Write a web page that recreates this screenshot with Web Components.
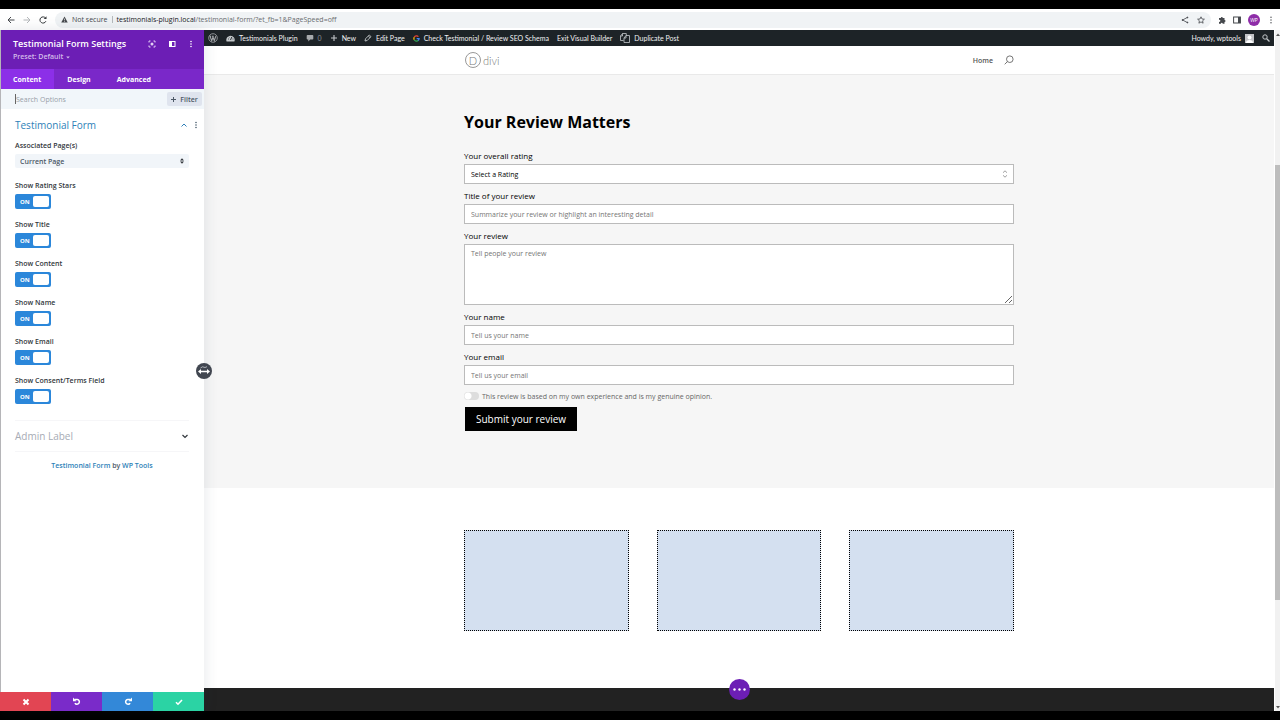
<!DOCTYPE html>
<html lang="en">
<head>
<meta charset="utf-8">
<title>Testimonial Form Settings</title>
<style>
  body {
    margin: 0;
    background: #000;
    font-family: "Open Sans", "Noto Sans", sans-serif;
    font-size: 7px;
  }
</style>
</head>
<body>
<builder-app></builder-app>

<script>
  const BASE = `
    :host, * { box-sizing: border-box; }
    button, input, select, textarea { font: inherit; color: inherit; margin: 0; }
    button { padding: 0; border: 0; background: none; cursor: pointer; }
    a { color: inherit; text-decoration: none; }
    svg { display: block; flex: none; }
  `;

  class BaseElement extends HTMLElement {
    constructor() {
      super();
      const shadow = this.attachShadow({ mode: "open" });
      shadow.innerHTML = `<style>${BASE}${this.styles()}</style>${this.markup()}`;
    }
  }

  /* BROWSER TOOLBAR */

  class BrowserBar extends BaseElement {
    styles() {
      return `
        :host { display: flex; align-items: center; height: 21px; padding: 0 5px 0 6px; gap: 7px; background: #fff; color: #45484c; }
        .nav { display: flex; gap: 6px; }
        .address { flex: 1; display: flex; align-items: center; gap: 4px; height: 16px; padding: 0 6px; border-radius: 8px; background: #f0f3f5; }
        .url { flex: 1; color: #6a6d70; white-space: nowrap; }
        .url b { font-weight: 500; color: #202124; }
        .sep { width: 1px; height: 7px; background: #b5b9bc; }
        .page-actions { display: flex; gap: 8px; }
        .tools { display: flex; align-items: center; gap: 7px; }
        .avatar { width: 12px; height: 12px; border-radius: 50%; background: #8e2da8; color: #fff; font-size: 5px; line-height: 12px; text-align: center; }
      `;
    }
    markup() {
      return `
        <div class="nav">
          <button aria-label="Back"><svg width="10" height="10" viewBox="0 0 10 10" fill="none" stroke="#45484c"><path d="M8.5 5H2M5 2 2 5l3 3"/></svg></button>
          <button aria-label="Forward"><svg width="10" height="10" viewBox="0 0 10 10" fill="none" stroke="#b4b7ba"><path d="M1.5 5H8M5 2l3 3-3 3"/></svg></button>
          <button aria-label="Reload"><svg width="10" height="10" viewBox="0 0 10 10" fill="none" stroke="#35383b"><path d="M7.9 6.2A3.1 3.1 0 1 1 7.6 3.2"/><path d="M8.5 1.2V4H5.7z" fill="#35383b" stroke="none"/></svg></button>
        </div>
        <div class="address">
          <svg width="7" height="7" viewBox="0 0 8 8"><path d="M4 .5 7.7 7.5H.3z" fill="#45484c"/><path d="M4 3v2M4 5.7v.9" stroke="#f0f3f5" stroke-width=".8"/></svg>
          <span>Not secure</span>
          <span class="sep"></span>
          <span class="url"><b>testimonials-plugin.local</b>/testimonial-form/?et_fb=1&amp;PageSpeed=off</span>
          <div class="page-actions">
            <button aria-label="Share"><svg width="8" height="8" viewBox="0 0 8 8" fill="#45484c" stroke="#45484c" stroke-width=".8"><path d="M6.3 1.5 1.5 4l4.8 2.500" fill="none"/><circle cx="6.4" cy="1.5" r=".5"/><circle cx="1.5" cy="4" r=".5"/><circle cx="6.4" cy="6.5" r=".5"/></svg></button>
            <button aria-label="Bookmark"><svg width="8" height="8" viewBox="0 0 8 8" fill="none" stroke="#45484c" stroke-width=".8"><path d="M4 .8 5 3l2.400.2-1.800 1.600.5 2.400L4 5.900 1.900 7.200l.5-2.400L.6 3.200 3 3z"/></svg></button>
          </div>
        </div>
        <div class="tools">
          <button aria-label="Extensions"><svg width="8" height="8" viewBox="0 0 8 8" fill="#45484c"><path d="M1 2h1.800a1 1 0 1 1 2 0h1.700v1.900a1 1 0 1 1 0 2v1.800H4.700a.9.9 0 1 0-1.800 0H1V5.800a1 1 0 1 0 0-1.900z"/></svg></button>
          <button aria-label="Side panel"><svg width="8" height="8" viewBox="0 0 8 8"><rect x=".6" y="1" width="6.8" height="6" fill="none" stroke="#45484c"/><path d="M5 1h2.500v6H5z" fill="#45484c"/></svg></button>
          <span class="avatar">WP</span>
          <button aria-label="Menu"><svg width="8" height="8" viewBox="0 0 8 8" fill="#45484c"><circle cx="4" cy="1.200" r=".7"/><circle cx="4" cy="4" r=".7"/><circle cx="4" cy="6.800" r=".7"/></svg></button>
        </div>
      `;
    }
  }

  /* SETTINGS PANEL */

  class ToggleOption extends BaseElement {
    styles() {
      return `
        :host { display: block; color: #32373c; }
        label { display: block; width: max-content; margin-bottom: 1px; font-weight: 600; line-height: 14px; cursor: pointer; }
        .switch { display: grid; width: 36px; height: 15px; border-radius: 2px; background: #2b87da; }
        .switch > * { grid-area: 1 / 1; }
        input { appearance: none; width: 36px; height: 15px; cursor: pointer; }
        .track { display: flex; align-items: center; justify-content: space-between; padding: 2px 2px 2px 5px; color: #fff; font-size: 6px; font-weight: 700; pointer-events: none; }
        .knob { width: 16px; height: 11px; border-radius: 2px; background: #fff; }
      `;
    }
    markup() {
      return `
        <label for="option"><slot></slot></label>
        <div class="switch">
          <input id="option" type="checkbox" checked>
          <span class="track">ON<span class="knob"></span></span>
        </div>
      `;
    }
  }

  class SettingsPanel extends BaseElement {
    styles() {
      return `
        :host { position: relative; z-index: 1; display: flex; flex-direction: column; background: #fff; border-left: 1px solid #b5b5b8; box-shadow: 0 0 14px rgba(43, 60, 80, .12); }
        header { height: 39px; padding: 7px 10px 0 12px; background: #6c1eb5; color: #fff; }
        .top { display: flex; align-items: center; }
        h1 { flex: 1; margin: 0; font-size: 9px; font-weight: 600; line-height: 14px; white-space: nowrap; }
        .icons { display: flex; gap: 12px; }
        .preset { display: flex; align-items: center; gap: 3px; line-height: 12px; color: #d3bcea; font-weight: 600; }
        .tabs { display: flex; height: 20px; background: #7a28c9; color: #fff; }
        .tabs button { padding: 0 13px; font-weight: 700; }
        .tabs .active { padding-left: 12px; background: #8c2fe8; }
        .search { display: flex; align-items: center; height: 20px; padding: 0 2px 0 14px; background: #f1f6fa; }
        .search input { flex: 1; min-width: 0; height: 10px; padding: 0; border: 0; border-left: 1px solid #666; outline: 0; background: none; }
        .search input::placeholder { color: #98a0a8; opacity: 1; }
        .filter { display: flex; align-items: center; justify-content: center; gap: 4px; width: 35px; height: 14px; border-radius: 2px; background: #dfe4ee; color: #4c5866; font-weight: 600; }
        .body { flex: 1; padding: 0 15px 0 14px; }
        .group { display: flex; align-items: center; height: 32px; }
        h2 { flex: 1; margin: 0; color: #2e7fb8; font-size: 10px; font-weight: 400; }
        .group .more { margin: 0 -11px 0 4px; }
        .field { display: block; color: #32373c; font-weight: 600; line-height: 10px; }
        .select { display: grid; align-items: center; margin-top: 3px; color: #4c5866; font-weight: 600; }
        .select > * { grid-area: 1 / 1; }
        select { appearance: none; width: 100%; height: 14px; padding: 0 5px; border: 0; border-radius: 2px; background: #f1f5f9; }
        .select svg { justify-self: end; margin-right: 5px; pointer-events: none; }
        .toggles { display: grid; gap: 9px; padding: 11px 0 16px; }
        .admin { border: solid #f6f6f8; border-width: 1px 0; }
        .admin h2 { color: #a7abb5; }
        .credit { margin: 0; line-height: 28px; text-align: center; color: #4c5866; font-weight: 600; }
        .credit a { color: #2e7fb8; }
        .actions { display: grid; grid-template-columns: repeat(4, 1fr); height: 19px; margin-left: -1px; }
        .actions button { display: grid; place-items: center; }
        .discard { background: #e24553; }
        .undo { background: #7a2bc9; }
        .redo { background: #3388d8; }
        .save { background: #2bd3a4; }
        .handle { position: absolute; top: 333px; right: -8px; display: grid; place-items: center; width: 16px; height: 16px; border-radius: 50%; background: #414650; }
      `;
    }
    markup() {
      return `
        <header>
          <div class="top">
            <h1>Testimonial Form Settings</h1>
            <div class="icons">
              <button aria-label="Expand"><svg width="8" height="8" viewBox="0 0 8 8" fill="none" stroke="#e2d0f4"><path d="M1 2.500V1h1.500M5.500 1H7v1.500M7 5.500V7H5.500M2.500 7H1V5.500"/><circle cx="4" cy="4" r="1.500" fill="#e2d0f4" stroke="none"/></svg></button>
              <button aria-label="Dock"><svg width="8" height="8" viewBox="0 0 8 8" fill="none" stroke="#fff"><rect x="1.500" y="1.500" width="5.500" height="5"/><path d="M1.500 1.500h2v5h-2z" fill="#fff"/></svg></button>
              <button aria-label="More"><svg width="6" height="8" viewBox="0 0 6 8" fill="#fff"><circle cx="3" cy="1.500" r=".8"/><circle cx="3" cy="4" r=".8"/><circle cx="3" cy="6.500" r=".8"/></svg></button>
            </div>
          </div>
          <button class="preset">Preset: Default <svg width="4" height="3" viewBox="0 0 4 3"><path d="M.2.5h3.600L2 2.500z" fill="#d3bcea"/></svg></button>
        </header>
        <nav class="tabs">
          <button class="active">Content</button>
          <button>Design</button>
          <button>Advanced</button>
        </nav>
        <div class="search">
          <input type="text" placeholder="Search Options" aria-label="Search Options">
          <button class="filter"><svg width="5" height="5" viewBox="0 0 5 5" stroke="#4c5866"><path d="M2.500 0v5M0 2.500h5"/></svg>Filter</button>
        </div>
        <div class="body">
          <div class="group">
            <h2>Testimonial Form</h2>
            <button aria-label="Collapse"><svg width="8" height="8" viewBox="0 0 8 8" fill="none" stroke="#2e7fb8"><path d="M1.500 5.500 4 3l2.500 2.500"/></svg></button>
            <button class="more" aria-label="More"><svg width="8" height="8" viewBox="0 0 8 8" fill="#4c6070"><circle cx="4" cy="1.500" r=".8"/><circle cx="4" cy="4" r=".8"/><circle cx="4" cy="6.500" r=".8"/></svg></button>
          </div>
          <label class="field" for="pages">Associated Page(s)</label>
          <div class="select">
            <select id="pages"><option>Current Page</option></select>
            <svg width="4" height="6" viewBox="0 0 4 6" fill="#32373c"><path d="M0 2.500 2 .2l2 2.300zM0 3.500h4L2 5.800z"/></svg>
          </div>
          <div class="toggles">
            <toggle-option>Show Rating Stars</toggle-option>
            <toggle-option>Show Title</toggle-option>
            <toggle-option>Show Content</toggle-option>
            <toggle-option>Show Name</toggle-option>
            <toggle-option>Show Email</toggle-option>
            <toggle-option>Show Consent/Terms Field</toggle-option>
          </div>
          <div class="group admin">
            <h2>Admin Label</h2>
            <button aria-label="Expand"><svg width="8" height="8" viewBox="0 0 8 8" fill="none" stroke="#32373c" stroke-width="1.200"><path d="M1.500 3 4 5.500 6.500 3"/></svg></button>
          </div>
          <p class="credit"><a href="#">Testimonial Form</a> by <a href="#">WP Tools</a></p>
        </div>
        <div class="actions">
          <button class="discard" aria-label="Discard"><svg width="8" height="8" viewBox="0 0 8 8" stroke="#fff" stroke-width="2"><path d="m1.500 1.500 5 5M6.500 1.500l-5 5"/></svg></button>
          <button class="undo" aria-label="Undo"><svg width="10" height="9" viewBox="0 0 10 9" fill="none" stroke="#fff" stroke-width="1.500"><path d="M2.500 2.500h2.800a2.400 2.400 0 1 1-2.400 3.600"/><path d="M1 .6v3.700h3.500z" fill="#fff" stroke="none"/></svg></button>
          <button class="redo" aria-label="Redo"><svg width="10" height="9" viewBox="0 0 10 9" fill="none" stroke="#fff" stroke-width="1.500"><path d="M7.500 2.500H4.700a2.400 2.400 0 1 0 2.400 3.600"/><path d="M9 .6v3.700H5.500z" fill="#fff" stroke="none"/></svg></button>
          <button class="save" aria-label="Save"><svg width="8" height="8" viewBox="0 0 8 8" fill="none" stroke="#fff" stroke-width="1.600"><path d="m1 4.200 2 2L7 2"/></svg></button>
        </div>
        <button class="handle" aria-label="Resize panel"><svg width="12" height="12" viewBox="0 0 12 12"><path d="M0 6.500 3 4v1.800h6V4l3 2.500L9 9V7.300H3V9z" fill="#fff"/><path d="m2.500 3 2-1.200L7 2.500l2-.8" fill="none" stroke="#c7cad0" stroke-width=".8"/></svg></button>
      `;
    }
  }

  /* WORDPRESS ADMIN BAR */

  class AdminBar extends BaseElement {
    styles() {
      return `
        :host { display: flex; align-items: center; height: 16px; padding: 0 4px; gap: 8px; background: #1d2327; color: #f0f0f1; font-family: Lato, sans-serif; white-space: nowrap; }
        a { display: flex; align-items: center; gap: 4px; }
        .dim { color: #8c9297; }
        .account { margin-left: auto; }
      `;
    }
    markup() {
      return `
        <a href="#" aria-label="WordPress"><svg width="10" height="10" viewBox="0 0 10 10" fill="none" stroke="#a7aaad"><circle cx="5" cy="5" r="4.300" stroke-width=".8"/><path d="m2 3.200 1.700 4.500L5 4.200l1.300 3.500 1.500-4.500M1.600 3.200h1.600M4 3.200h1.700" stroke-width="1.100"/></svg></a>
        <a href="#"><svg width="9" height="9" viewBox="0 0 9 9"><path d="M.6 7.500a4.200 4.200 0 1 1 7.800 0z" fill="#c3c7ca"/><path d="m4.500 6 1.300-3M2 5h.8M2.700 2.700l.6.6M6.600 5h.8" stroke="#1d2327" stroke-width=".9"/></svg>Testimonials Plugin</a>
        <a href="#" class="dim"><svg width="8" height="8" viewBox="0 0 8 8" fill="#a7aaad"><path d="M1.500 1h5a.8.8 0 0 1 .8.800v2.900a.8.8 0 0 1-.8.8H4.200L2.300 7.500v-2h-.8a.8.8 0 0 1-.8-.8V1.800A.8.8 0 0 1 1.500 1z"/></svg>0</a>
        <a href="#"><svg width="8" height="8" viewBox="0 0 8 8" stroke="#c3c7ca" stroke-width="1.100"><path d="M4 1v6M1 4h6"/></svg>New</a>
        <a href="#"><svg width="8" height="8" viewBox="0 0 8 8" fill="none" stroke="#c3c7ca" stroke-width=".9"><path d="M1 7l.5-2.200L5.300 1 7 2.700 3.200 6.500zM4.300 2l1.700 1.700"/></svg>Edit Page</a>
        <a href="#"><svg width="7" height="7" viewBox="0 0 8 8" fill="none" stroke-width="1.400"><path d="M6.200 1.800A3 3 0 0 0 1.400 2.600" stroke="#ea4335"/><path d="M1.400 2.600a3 3 0 0 0 0 2.800" stroke="#fbbc05"/><path d="M1.400 5.400A3 3 0 0 0 6 6.300" stroke="#34a853"/><path d="M6 6.300A3 3 0 0 0 7 4.100H4.200" stroke="#4285f4"/></svg>Check Testimonial / Review SEO Schema</a>
        <a href="#">Exit Visual Builder</a>
        <a href="#"><svg width="10" height="10" viewBox="0 0 10 10" fill="none" stroke="#c3c7ca" stroke-width=".8"><path d="M3.500 7.500h-3V3l2-2.500h3.800v2M2.500.5V3h-2M9.500 9.500H4V5l2-2.500h3.500zM6 2.500V5H4"/></svg>Duplicate Post</a>
        <a href="#" class="account">Howdy, wptools <svg width="9" height="9" viewBox="0 0 9 9"><path d="M0 0h9v9H0z" fill="#c3c4c7"/><circle cx="4.500" cy="3.500" r="2" fill="#fff"/><path d="M1 9c0-2 1.500-3 3.500-3S8 7 8 9z" fill="#fff"/></svg></a>
        <a href="#" aria-label="Search"><svg width="8" height="8" viewBox="0 0 8 8" fill="none" stroke="#c3c7ca"><circle cx="3" cy="3" r="2.200"/><path d="m4.700 4.700 2.800 2.800" stroke-width="1.300"/></svg></a>
      `;
    }
  }

  /* SITE */

  class SiteHeader extends BaseElement {
    styles() {
      return `
        :host { position: relative; display: block; background: #fff; box-shadow: 0 1px 0 rgba(0, 0, 0, .05); color: #555; }
        .row { display: flex; align-items: center; justify-content: space-between; width: 80%; max-width: 550px; height: 28px; margin: 0 auto; }
        .logo { display: flex; align-items: center; gap: 2px; padding-left: 1px; color: #777; font-family: Lato, sans-serif; font-size: 11px; font-weight: 300; }
        .mark { display: grid; place-items: center; width: 16px; height: 16px; border: 1px solid #999; border-radius: 50%; }
        nav { display: flex; align-items: center; gap: 11px; font-weight: 600; }
      `;
    }
    markup() {
      return `
        <div class="row">
          <a class="logo" href="#"><span class="mark">D</span>divi</a>
          <nav>
            <a href="#">Home</a>
            <button aria-label="Search"><svg width="10" height="10" viewBox="0 0 10 10" fill="none" stroke="#666" stroke-width=".9"><circle cx="5.800" cy="4.200" r="3.300"/><path d="M3.500 6.500.7 9.300"/></svg></button>
          </nav>
        </div>
      `;
    }
  }

  class ReviewForm extends BaseElement {
    styles() {
      return `
        :host { display: block; padding: 38px 0 57px; background: #f6f6f6; color: #000; }
        form { width: 80%; max-width: 550px; margin: 0 auto; }
        h2 { margin: 0 0 16px; font-size: 16px; font-weight: 700; line-height: 20px; }
        .field { display: grid; margin-bottom: 4px; }
        .field label { font-size: 8px; line-height: 16px; }
        input[type="text"], input[type="email"], select, textarea { width: 100%; height: 20px; padding: 0 6px; border: 1px solid #bbb; border-radius: 0; background: #fff; outline: 0; }
        textarea { display: block; height: 61px; padding-top: 4px; resize: vertical; }
        ::placeholder { color: #757575; opacity: 1; }
        select { appearance: none; }
        .select { display: grid; align-items: center; }
        .select > * { grid-area: 1 / 1; }
        .select svg { justify-self: end; margin-right: 6px; pointer-events: none; }
        .consent { display: flex; align-items: center; gap: 3px; height: 14px; margin-bottom: 4px; color: #666; }
        .consent input { appearance: none; width: 15px; height: 8px; border-radius: 4px; background: radial-gradient(circle at 4px 4px, #fff 3px, transparent 4px), #ddd; }
        .submit { display: block; height: 24px; margin: 0 0 0 1px; padding: 0 11px; background: #000; color: #fff; font-size: 10px; }
      `;
    }
    markup() {
      return `
        <form>
          <h2>Your Review Matters</h2>
          <div class="field">
            <label for="rating">Your overall rating</label>
            <div class="select">
              <select id="rating"><option>Select a Rating</option></select>
              <svg width="6" height="8" viewBox="0 0 6 8" fill="none" stroke="#888" stroke-width=".8"><path d="M1 2.700 3 .8l2 1.900M1 5.300l2 1.900 2-1.900"/></svg>
            </div>
          </div>
          <div class="field">
            <label for="title">Title of your review</label>
            <input id="title" type="text" placeholder="Summarize your review or highlight an interesting detail">
          </div>
          <div class="field">
            <label for="review">Your review</label>
            <textarea id="review" placeholder="Tell people your review"></textarea>
          </div>
          <div class="field">
            <label for="name">Your name</label>
            <input id="name" type="text" placeholder="Tell us your name">
          </div>
          <div class="field">
            <label for="email">Your email</label>
            <input id="email" type="email" placeholder="Tell us your email">
          </div>
          <div class="consent">
            <input id="consent" type="checkbox">
            <label for="consent">This review is based on my own experience and is my genuine opinion.</label>
          </div>
          <button class="submit" type="button">Submit your review</button>
        </form>
      `;
    }
  }

  class ColumnRow extends BaseElement {
    styles() {
      return `
        :host { display: block; flex: 1; padding: 42px 0 57px; background: #fff; }
        .row { display: grid; grid-template-columns: repeat(3, 1fr); gap: 28px; width: 80%; max-width: 550px; margin: 0 auto; }
        .row div { height: 101px; border: 1px dotted #000; background: #d4e0f0; }
      `;
    }
    markup() {
      return `<div class="row"><div></div><div></div><div></div></div>`;
    }
  }

  class SiteFooter extends BaseElement {
    styles() {
      return `
        :host { position: relative; display: block; height: 23px; background: #222; }
        button { position: absolute; top: -9px; left: 50%; display: grid; place-items: center; width: 21px; height: 21px; margin-left: -10px; border-radius: 50%; background: #6c1eb5; }
      `;
    }
    markup() {
      return `<button aria-label="Page settings"><svg width="13" height="3" viewBox="0 0 13 3" fill="#fff"><circle cx="1.500" cy="1.500" r="1.200"/><circle cx="6.500" cy="1.500" r="1.200"/><circle cx="11.500" cy="1.500" r="1.200"/></svg></button>`;
    }
  }

  class PageScrollbar extends BaseElement {
    styles() {
      return `
        :host { display: grid; grid-template-rows: 8px 127fr 435fr 103fr 8px; justify-items: center; align-items: center; background: #f1f1f1; }
        .thumb { grid-row: 3; width: 100%; height: 100%; background: #bdbdbd; }
        .down { grid-row: 5; }
      `;
    }
    markup() {
      return `
        <svg width="4" height="3" viewBox="0 0 4 3"><path d="M0 3 2 .5 4 3z" fill="#555"/></svg>
        <span class="thumb"></span>
        <svg class="down" width="4" height="3" viewBox="0 0 4 3"><path d="M0 0h4L2 2.500z" fill="#555"/></svg>
      `;
    }
  }

  class BuilderApp extends BaseElement {
    styles() {
      return `
        :host { display: flex; flex-direction: column; min-height: 100vh; padding: 9px 0; }
        .workspace { flex: 1; display: grid; grid-template-columns: 204px 1fr 5px; }
        .page { display: flex; flex-direction: column; min-width: 0; border-right: 1px solid #fff; }
      `;
    }
    markup() {
      return `
        <browser-bar></browser-bar>
        <div class="workspace">
          <settings-panel></settings-panel>
          <div class="page">
            <admin-bar></admin-bar>
            <site-header></site-header>
            <review-form></review-form>
            <column-row></column-row>
            <site-footer></site-footer>
          </div>
          <page-scrollbar></page-scrollbar>
        </div>
      `;
    }
  }

  customElements.define("browser-bar", BrowserBar);
  customElements.define("toggle-option", ToggleOption);
  customElements.define("settings-panel", SettingsPanel);
  customElements.define("admin-bar", AdminBar);
  customElements.define("site-header", SiteHeader);
  customElements.define("review-form", ReviewForm);
  customElements.define("column-row", ColumnRow);
  customElements.define("site-footer", SiteFooter);
  customElements.define("page-scrollbar", PageScrollbar);
  customElements.define("builder-app", BuilderApp);
</script>
</body>
</html>
